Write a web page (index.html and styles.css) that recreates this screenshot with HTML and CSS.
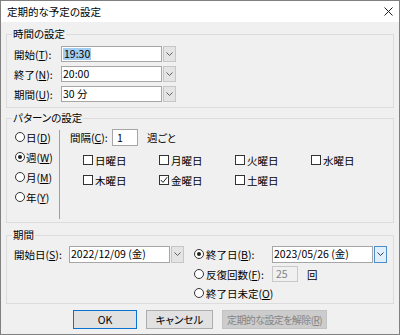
FILE: index.html
```html
<!DOCTYPE html>
<html>
<head>
    <meta charset="UTF-8">
    <title>定期的な予定の設定</title>
    <link rel="stylesheet" href="styles.css">
</head>
<body>
<div class="dialog">
    <div class="titlebar">
        <span class="title">定期的な予定の設定</span>
        <svg class="close" width="9" height="9" viewBox="0 0 9 9">
            <path d="M0.5 0.5L8.5 8.5M8.5 0.5L0.5 8.5" stroke="#1a1a1a" stroke-width="1" fill="none"/>
        </svg>
    </div>
    <div class="content">
        <fieldset class="group group-time">
            <legend>時間の設定</legend>
            <div class="time-rows">
                <div class="row">
                    <label class="lbl-time">開始(<u>T</u>):</label>
                    <div class="combo">
                        <div class="field"><span class="sel">19:30</span></div>
                        <div class="drop"><svg width="7" height="4" viewBox="0 0 7 4"><path d="M0.5 0.5L3.5 3.5L6.5 0.5" stroke="#606060" fill="none"/></svg></div>
                    </div>
                </div>
                <div class="row">
                    <label class="lbl-time">終了(<u>N</u>):</label>
                    <div class="combo">
                        <div class="field">20:00</div>
                        <div class="drop"><svg width="7" height="4" viewBox="0 0 7 4"><path d="M0.5 0.5L3.5 3.5L6.5 0.5" stroke="#606060" fill="none"/></svg></div>
                    </div>
                </div>
                <div class="row">
                    <label class="lbl-time">期間(<u>U</u>):</label>
                    <div class="combo">
                        <div class="field">30 分</div>
                        <div class="drop"><svg width="7" height="4" viewBox="0 0 7 4"><path d="M0.5 0.5L3.5 3.5L6.5 0.5" stroke="#606060" fill="none"/></svg></div>
                    </div>
                </div>
            </div>
        </fieldset>

        <fieldset class="group group-pattern">
            <legend>パターンの設定</legend>
            <div class="pattern">
                <div class="freq">
                    <div class="opt"><span class="radio"></span>日(<u>D</u>)</div>
                    <div class="opt"><span class="radio on"></span>週(<u>W</u>)</div>
                    <div class="opt"><span class="radio"></span>月(<u>M</u>)</div>
                    <div class="opt"><span class="radio"></span>年(<u>Y</u>)</div>
                </div>
                <div class="sep"></div>
                <div class="weekly">
                    <div class="interval">
                        <label class="lbl-interval">間隔(<u>C</u>):</label>
                        <div class="box box-interval">1</div>
                        <span class="unit">週ごと</span>
                    </div>
                    <div class="days">
                        <div class="check"><span class="cb"></span>日曜日</div>
                        <div class="check"><span class="cb"></span>月曜日</div>
                        <div class="check"><span class="cb"></span>火曜日</div>
                        <div class="check"><span class="cb"></span>水曜日</div>
                        <div class="check"><span class="cb"></span>木曜日</div>
                        <div class="check"><span class="cb"><svg width="8" height="8" viewBox="0 0 8 8"><path d="M0.8 4L3 6.4L7.2 1.2" stroke="#222" stroke-width="1" fill="none"/></svg></span>金曜日</div>
                        <div class="check"><span class="cb"></span>土曜日</div>
                    </div>
                </div>
            </div>
        </fieldset>

        <fieldset class="group group-range">
            <legend>期間</legend>
            <div class="range">
                <div class="start">
                    <label class="lbl-start">開始日(<u>S</u>):</label>
                    <div class="combo combo-date">
                        <div class="field">2022/12/09 (金)</div>
                        <div class="drop"><svg width="7" height="4" viewBox="0 0 7 4"><path d="M0.5 0.5L3.5 3.5L6.5 0.5" stroke="#606060" fill="none"/></svg></div>
                    </div>
                </div>
                <div class="end">
                    <div class="end-row">
                        <span class="radio on"></span>
                        <label class="lbl-end">終了日(<u>B</u>):</label>
                        <div class="combo combo-date">
                            <div class="field">2023/05/26 (金)</div>
                            <div class="drop hot"><svg width="7" height="4" viewBox="0 0 7 4"><path d="M0.5 0.5L3.5 3.5L6.5 0.5" stroke="#3a3a3a" fill="none"/></svg></div>
                        </div>
                    </div>
                    <div class="end-row">
                        <span class="radio"></span>
                        <label class="lbl-end">反復回数(<u>F</u>):</label>
                        <div class="box box-count">25</div>
                        <span class="unit">回</span>
                    </div>
                    <div class="end-row last">
                        <span class="radio"></span>
                        <label>終了日未定(<u>O</u>)</label>
                    </div>
                </div>
            </div>
        </fieldset>

        <div class="buttons">
            <div class="btn btn-default">OK</div>
            <div class="btn btn-cancel">キャンセル</div>
            <div class="btn btn-off">定期的な設定を解除(<u>R</u>)</div>
        </div>
    </div>
</div>
</body>
</html>
```

FILE: styles.css
```css
* {
    box-sizing: border-box;
}

html, body {
    margin: 0;
    padding: 0;
}

body {
    width: 400px;
    height: 335px;
    font-family: "Noto Sans CJK JP", sans-serif;
    font-size: 10.5px;
    font-feature-settings: "palt";
    color: #000;
}

u {
    text-underline-offset: 1px;
}

.dialog {
    width: 400px;
    height: 335px;
    border: 1px solid #808080;
    background: #f0f0f0;
    display: flex;
    flex-direction: column;
}

.titlebar {
    height: 21px;
    background: #fff;
    display: flex;
    align-items: center;
    justify-content: space-between;
    padding: 0 6px 0 6px;
}

.title {
    line-height: 14px;
}

.content {
    padding: 5px 5px 0 5px;
    display: flex;
    flex-direction: column;
}

.group {
    margin: 0;
    min-width: 0;
    border: 1px solid #dcdcdc;
    padding: 0 6px 5px 7px;
}

.group legend {
    padding: 0 1px;
    margin-left: -2px;
    line-height: 14px;
}

/* 時間の設定 */
.group-time {
    padding-top: 5px;
}

.time-rows {
    display: flex;
    flex-direction: column;
    gap: 4px;
}

.row {
    display: flex;
    align-items: center;
    height: 16px;
}

.lbl-time {
    width: 47px;
}

.combo {
    display: flex;
    height: 16px;
}

.combo .field {
    width: 101px;
    height: 100%;
    border: 1px solid #a6a6a6;
    background: #fff;
    padding-left: 1px;
    line-height: 14px;
    white-space: nowrap;
}

.combo .drop {
    width: 13px;
    height: 100%;
    margin-left: 1px;
    border: 1px solid #c6c6c6;
    background: #e4e4e4;
    display: flex;
    align-items: center;
    justify-content: center;
}

.combo .drop.hot {
    border-color: #4d8fcc;
    background: #e1eefb;
}

.sel {
    display: inline-block;
    background: #a2cdf2;
    line-height: 12px;
    padding: 0 1px;
}

/* パターンの設定 */
.group-pattern {
    margin-top: 3px;
    padding-top: 2px;
    padding-bottom: 3px;
}

.pattern {
    display: flex;
}

.freq {
    width: 52px;
    padding-left: 1px;
    display: flex;
    flex-direction: column;
}

.opt {
    height: 20px;
    display: flex;
    align-items: center;
}

.radio {
    width: 10px;
    height: 10px;
    border: 1px solid #333;
    border-radius: 50%;
    background: #fff;
    margin-right: 1px;
    display: inline-flex;
    align-items: center;
    justify-content: center;
    flex-shrink: 0;
}

.radio.on::after {
    content: "";
    width: 4px;
    height: 4px;
    border-radius: 50%;
    background: #222;
}

.sep {
    width: 1px;
    height: 89px;
    margin-top: 3px;
    background: #a0a0a0;
}

.weekly {
    margin-left: 10px;
}

.interval {
    display: flex;
    align-items: center;
    height: 17px;
    margin-top: 2px;
}

.lbl-interval {
    width: 42px;
}

.box {
    height: 17px;
    border: 1px solid #a6a6a6;
    background: #fff;
    line-height: 15px;
}

.box-interval {
    width: 26px;
    padding-left: 4px;
}

.unit {
    margin-left: 9px;
}

.days {
    display: grid;
    grid-template-columns: repeat(4, 76px);
    margin: 4px 0 0 13px;
}

.check {
    height: 20px;
    display: flex;
    align-items: center;
}

.cb {
    width: 10px;
    height: 10px;
    border: 1px solid #333;
    background: #fff;
    margin-right: 2px;
    display: inline-flex;
    align-items: center;
    justify-content: center;
    flex-shrink: 0;
}

/* 期間 */
.group-range {
    margin-top: 5px;
    padding-top: 2px;
    padding-bottom: 1px;
}

.range {
    display: flex;
}

.start {
    display: flex;
    align-items: center;
    height: 20px;
}

.lbl-start {
    width: 55px;
}

.combo-date {
    height: 17px;
}

.end {
    display: flex;
    flex-direction: column;
    margin-left: 10px;
}

.end-row {
    height: 20px;
    display: flex;
    align-items: center;
}

.end-row.last {
    height: 18px;
}

.end-row .radio {
    margin-right: 2px;
}

.lbl-end {
    width: 66px;
    white-space: nowrap;
}

.box-count {
    width: 26px;
    height: 16px;
    line-height: 14px;
    padding-left: 3px;
    background: #f0f0f0;
    border-color: #c9c9c9;
    color: #838383;
}

/* ボタン */
.buttons {
    display: flex;
    justify-content: center;
    gap: 9px;
    margin-top: 6px;
}

.btn {
    height: 19px;
    line-height: 17px;
    text-align: center;
    white-space: nowrap;
    border: 1px solid #adadad;
    background: #e1e1e1;
}

.btn-default {
    width: 64px;
    border-color: #0a72d0;
}

.btn-cancel {
    width: 67px;
}

.btn-off {
    width: 105px;
    border-color: #c2c2c2;
    background: #cccccc;
    color: #858585;
    font-size: 10px;
    letter-spacing: -0.6px;
}
```
